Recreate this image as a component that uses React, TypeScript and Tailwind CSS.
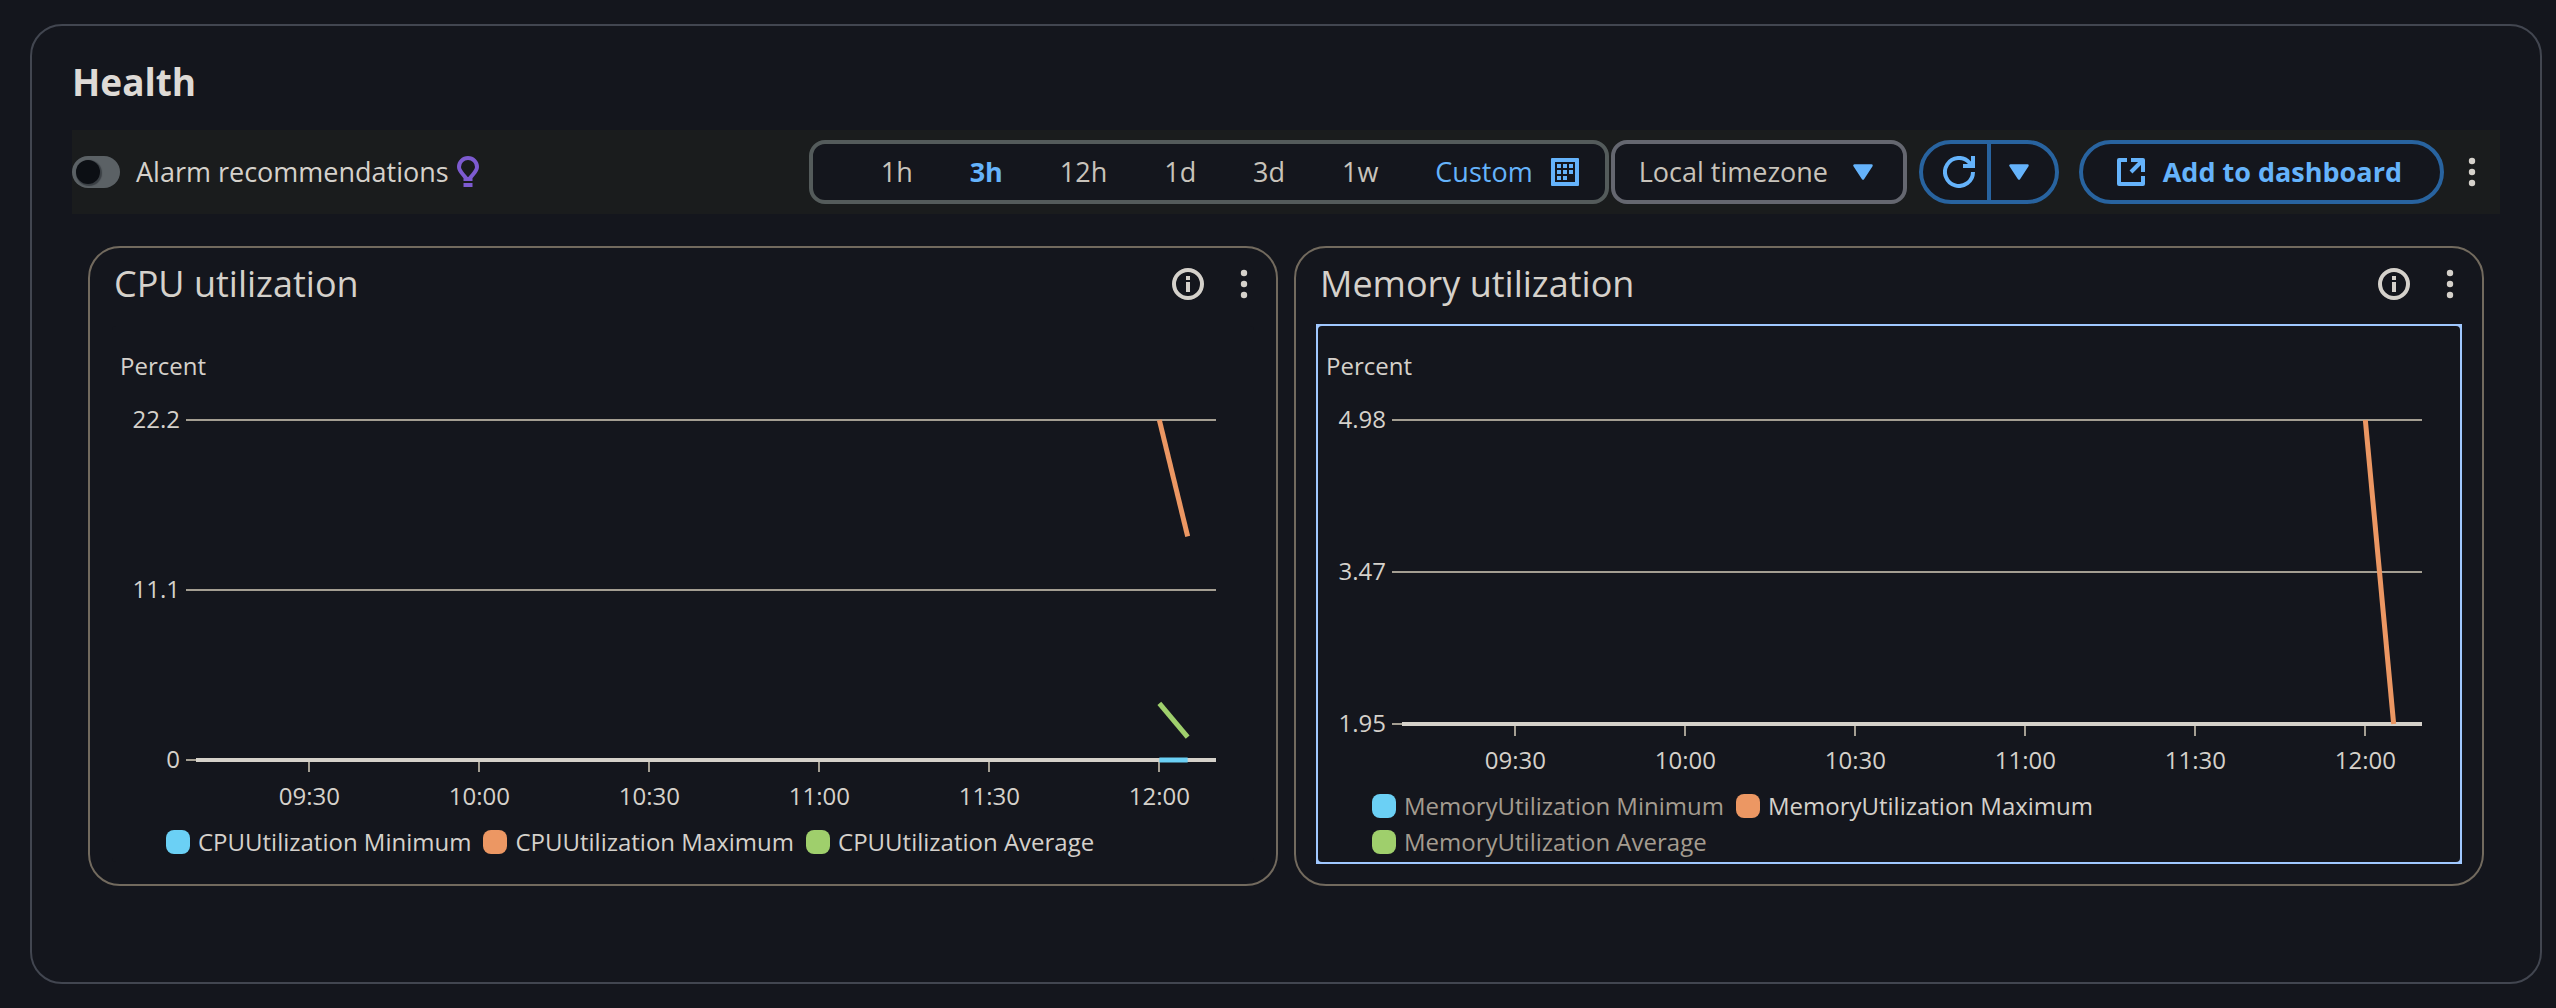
import React from "react";

type Series = {
  name: string;
  color: string;
  points: [number, number][];
  hidden?: boolean;
};

type ChartCardProps = {
  title: string;
  yTicks: string[];
  min: number;
  max: number;
  plotHeight: number;
  series: Series[];
  focused?: boolean;
};

const BLUE = "#6bd0f5";
const ORANGE = "#ec9763";
const GREEN = "#9fcf6c";

/* Time axis: 09:10 to 12:10, in minutes from its start. */
const SPAN = 180;
const TIME_TICKS = [
  { label: "09:30", at: 20 },
  { label: "10:00", at: 50 },
  { label: "10:30", at: 80 },
  { label: "11:00", at: 110 },
  { label: "11:30", at: 140 },
  { label: "12:00", at: 170 },
];
const PLOT_TOP = 38;

const percent = (minutes: number) => `${(minutes / SPAN) * 100}%`;

function Caret({ className = "" }: { className?: string }) {
  return (
    <svg className={className} width="20" height="16" viewBox="0 0 20 16" aria-hidden="true">
      <path d="M1.5 1.5h17L10 14.5z" fill="currentColor" stroke="currentColor" strokeWidth="2.5" strokeLinejoin="round" />
    </svg>
  );
}

function Dots() {
  return (
    <svg width="8" height="30" viewBox="0 0 8 30" fill="currentColor" aria-hidden="true">
      <circle cx="4" cy="4" r="3.2" />
      <circle cx="4" cy="15" r="3.2" />
      <circle cx="4" cy="26" r="3.2" />
    </svg>
  );
}

function BulbIcon() {
  return (
    <svg width="22" height="32" viewBox="0 0 22 32" aria-hidden="true">
      <path
        d="M11 2a9 9 0 0 1 9 9c0 4-3.5 6.5-6.5 10.500V23h-5v-1.500C5.500 17.500 2 15 2 11a9 9 0 0 1 9-9z"
        fill="none"
        stroke="#7d5bd0"
        strokeWidth="4"
      />
      <path d="M6.500 27h9v4h-9z" fill="#7d5bd0" />
    </svg>
  );
}

function CalendarIcon() {
  return (
    <svg width="28" height="28" viewBox="0 0 28 28" fill="currentColor" aria-hidden="true">
      <path fillRule="evenodd" d="M1 0h26a1 1 0 0 1 1 1v26a1 1 0 0 1-1 1H1a1 1 0 0 1-1-1V1a1 1 0 0 1 1-1zM4 4v20h20V4z" />
      <path d="M6 6h4v4H6zM12 6h4v4h-4zM18 6h4v4h-4zM6 12h4v4H6zM12 12h4v4h-4zM18 12h4v4h-4zM6 18h4v4H6zM12 18h4v4h-4z" />
    </svg>
  );
}

function RefreshIcon() {
  return (
    <svg width="32" height="32" viewBox="0 0 32 32" fill="none" stroke="currentColor" strokeWidth="4" aria-hidden="true">
      <path d="M30 16a14 14 0 1 1-3.5-9.3L29 10" />
      <path d="M30 0v10H20" />
    </svg>
  );
}

function ExternalIcon() {
  return (
    <svg width="28" height="28" viewBox="0 0 28 28" fill="none" stroke="currentColor" strokeWidth="4" aria-hidden="true">
      <path d="M10 2H2v24h24v-8" strokeLinejoin="round" />
      <path d="M14 2h12v12" strokeLinejoin="round" />
      <path d="M26 2L14 14" />
    </svg>
  );
}

function InfoIcon() {
  return (
    <svg width="32" height="32" viewBox="0 0 32 32" aria-hidden="true">
      <circle cx="16" cy="16" r="14" fill="none" stroke="currentColor" strokeWidth="4" />
      <path d="M14 8h4v4h-4zM14 14h4v10h-4z" fill="currentColor" />
    </svg>
  );
}

function Plot({ yTicks, min, max, plotHeight, series }: Omit<ChartCardProps, "title" | "focused">) {
  const bottom = PLOT_TOP + plotHeight;
  const y = (value: number) => bottom - ((value - min) / (max - min)) * plotHeight;
  const step = plotHeight / (yTicks.length - 1);

  return (
    <svg className="block w-full overflow-visible text-2xl" height={plotHeight + 102} role="img" aria-label="Line chart">
      {yTicks.map((tick, i) => {
        const ty = PLOT_TOP + i * step;
        return (
          <g key={tick}>
            <line x1="-10" x2={i === yTicks.length - 1 ? "0" : "100%"} y1={ty} y2={ty} stroke="#a49e92" strokeWidth="2" />
            <text x="-16" y={ty + 8} textAnchor="end" fill="#d5d1cb">
              {tick}
            </text>
          </g>
        );
      })}
      {TIME_TICKS.map(({ label, at }) => (
        <g key={label}>
          <line x1={percent(at)} x2={percent(at)} y1={bottom} y2={bottom + 12} stroke="#a49e92" strokeWidth="2" shapeRendering="crispEdges" />
          <text x={percent(at)} y={bottom + 45} textAnchor="middle" fill="#d5d1cb">
            {label}
          </text>
        </g>
      ))}
      <line x1="0" x2="100%" y1={bottom} y2={bottom} stroke="#d5d1ca" strokeWidth="4" />
      {series
        .filter((s) => !s.hidden)
        .map((s) =>
          s.points.slice(1).map(([t, v], i) => (
            <line
              key={`${s.name}-${t}`}
              x1={percent(s.points[i][0])}
              y1={y(s.points[i][1])}
              x2={percent(t)}
              y2={y(v)}
              stroke={s.color}
              strokeWidth="5"
            />
          )),
        )}
    </svg>
  );
}

function ChartCard({ title, focused = false, series, ...plot }: ChartCardProps) {
  return (
    <article className="min-w-0 flex-1 rounded-[32px] border-2 border-[#726a5e] px-5 pb-5">
      <header className="mb-1 flex h-[72px] items-center pl-1">
        <h3 className="flex-1 text-4xl">{title}</h3>
        <button type="button" aria-label={`About ${title}`}>
          <InfoIcon />
        </button>
        <button type="button" aria-label={`${title} actions`} className="ml-5 -mr-2 flex w-10 justify-center">
          <Dots />
        </button>
      </header>
      <div className={focused ? "bg-[#a0c8ff] p-0.5" : "p-0.5"}>
        <div className="rounded bg-[#14161d] pt-6 pb-0.5">
          <p className="pl-2 text-2xl leading-8">Percent</p>
          <div className="pr-[38px] pl-[84px]">
            <Plot series={series} {...plot} />
          </div>
          <ul className="flex flex-wrap gap-x-3 pr-[38px] pl-[54px]">
            {series.map((s) => (
              <li key={s.name}>
                <button
                  type="button"
                  className={
                    s.hidden
                      ? "flex items-center gap-2 text-2xl leading-9 text-[#a49c90]"
                      : "flex items-center gap-2 text-2xl leading-9 text-[#d5d1cb]"
                  }
                >
                  <span className="size-6 rounded-lg" style={{ backgroundColor: s.color }} />
                  {s.name}
                </button>
              </li>
            ))}
          </ul>
        </div>
      </div>
    </article>
  );
}

const RANGES = ["1h", "3h", "12h", "1d", "3d", "1w"];

export default function App() {
  return (
    <main className="min-h-screen bg-[#14161d] pt-6 pr-3.5 pb-6 pl-[30px] font-['Open_Sans','Noto_Sans',sans-serif] text-[#d5d1cb]">
      <section className="rounded-[32px] border-2 border-[#424650] px-10 pt-8 pb-24">
        <h2 className="mb-6 text-[37px] leading-[48px] font-bold text-[#dedad6]">Health</h2>

        <div className="flex items-center bg-[#1a1c1d] py-2.5 text-[27px] leading-9">
          <label className="flex items-center gap-4">
            <input
              type="checkbox"
              role="switch"
              className="flex h-8 w-12 appearance-none items-center rounded-full bg-[#5b6165] pl-1 before:size-6 before:rounded-full before:bg-[#0c0f14] before:shadow-[1px_1px_1px_1px_#3a3f44] before:content-['']"
            />
            Alarm recommendations
          </label>
          <span className="ml-2">
            <BulbIcon />
          </span>

          <div className="ml-auto flex h-16 w-[800px] items-center justify-between rounded-2xl border-4 border-[#545b5b] bg-[#14161d] pr-[26px] pl-[68px] text-[#c8c3bb]">
            {RANGES.map((range) => (
              <button key={range} type="button" className={range === "3h" ? "font-bold text-[#65b3fb]" : ""}>
                {range}
              </button>
            ))}
            <button type="button" className="flex items-center gap-[18px] text-[#65b3fb]">
              Custom
              <CalendarIcon />
            </button>
          </div>

          <div className="relative ml-0.5 text-[#65b3fb]">
            <select
              aria-label="Timezone"
              className="h-16 w-[296px] appearance-none rounded-2xl border-4 border-[#656770] bg-[#14161d] pl-6 text-[#c8c3bb]"
            >
              <option>Local timezone</option>
              <option>UTC timezone</option>
            </select>
            <Caret className="pointer-events-none absolute top-6 right-[34px]" />
          </div>

          <div className="ml-3 flex h-16 rounded-full border-4 border-[#28639f] bg-[#14161d] text-[#65b3fb]">
            <button type="button" aria-label="Refresh" className="border-r-4 border-[#28639f] pr-3 pl-5">
              <RefreshIcon />
            </button>
            <button type="button" aria-label="Refresh interval" className="pr-[26px] pl-[18px]">
              <Caret />
            </button>
          </div>

          <button
            type="button"
            className="ml-5 flex h-16 items-center gap-[18px] rounded-full border-4 border-[#28639f] bg-[#14161d] pr-[38px] pl-[34px] font-bold text-[#65b3fb]"
          >
            <ExternalIcon />
            Add to dashboard
          </button>
          <button type="button" aria-label="More actions" className="flex w-14 justify-center">
            <Dots />
          </button>
        </div>

        <div className="mt-8 flex gap-4 px-4">
          <ChartCard
            title="CPU utilization"
            yTicks={["22.2", "11.1", "0"]}
            min={0}
            max={22.2}
            plotHeight={340}
            series={[
              { name: "CPUUtilization Minimum", color: BLUE, points: [[170, 0], [175, 0]] },
              { name: "CPUUtilization Maximum", color: ORANGE, points: [[170, 22.2], [175, 14.6]] },
              { name: "CPUUtilization Average", color: GREEN, points: [[170, 3.7], [175, 1.5]] },
            ]}
          />
          <ChartCard
            title="Memory utilization"
            focused
            yTicks={["4.98", "3.47", "1.95"]}
            min={1.95}
            max={4.98}
            plotHeight={304}
            series={[
              { name: "MemoryUtilization Minimum", color: BLUE, points: [], hidden: true },
              { name: "MemoryUtilization Maximum", color: ORANGE, points: [[170, 4.98], [175, 1.95]] },
              { name: "MemoryUtilization Average", color: GREEN, points: [], hidden: true },
            ]}
          />
        </div>
      </section>
    </main>
  );
}
